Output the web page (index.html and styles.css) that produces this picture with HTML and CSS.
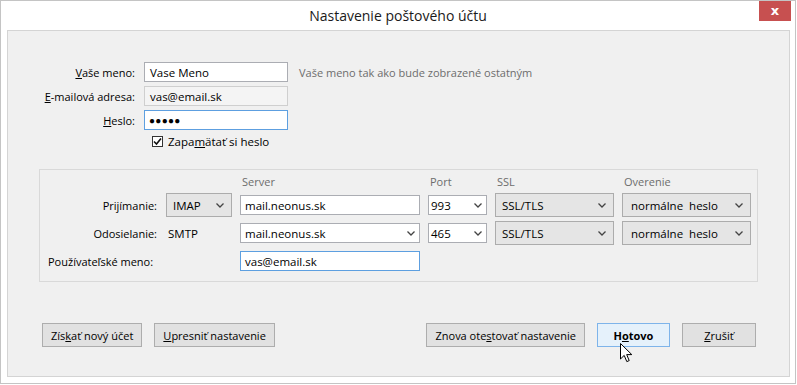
FILE: index.html
```html
<!DOCTYPE html>
<html lang="sk">
<head>
  <meta charset="UTF-8">
  <title>Nastavenie poštového účtu</title>
  <link rel="stylesheet" href="styles.css">
</head>
<body>
  <div class="window">
    <div class="titlebar">
      <span class="title">Nastavenie poštového účtu</span>
      <button class="close">x</button>
    </div>

    <div class="panel">
      <!-- Identity -->
      <div class="account">
        <span class="label"><u>V</u>aše meno:</span>
        <div class="field">Vase Meno</div>
        <span class="hint">Vaše meno tak ako bude zobrazené ostatným</span>

        <span class="label"><u>E</u>-mailová adresa:</span>
        <div class="field field-readonly">vas@email.sk</div>
        <span></span>

        <span class="label"><u>H</u>eslo:</span>
        <div class="field field-focus password">●●●●●</div>
        <span></span>

        <label class="remember">
          <span class="checkbox">
            <svg width="9" height="9" viewBox="0 0 9 9"><path d="M1 4.5 L3.5 7 L8 1.5" fill="none" stroke="#111" stroke-width="1.6"/></svg>
          </span>
          <span>Zapa<u>m</u>ätať si heslo</span>
        </label>
      </div>

      <!-- Servers -->
      <div class="servers">
        <span></span>
        <span></span>
        <span class="head">Server</span>
        <span class="head">Port</span>
        <span class="head">SSL</span>
        <span class="head">Overenie</span>

        <span class="label">Prijímanie:</span>
        <div class="select">IMAP <svg class="chev" width="8" height="5" viewBox="0 0 8 5"><path d="M0.5 0.5 L4 4 L7.5 0.5" fill="none" stroke="#444" stroke-width="1.3"/></svg></div>
        <div class="field field-row">mail.neonus.sk</div>
        <div class="field field-row combo">993 <svg class="chev" width="8" height="5" viewBox="0 0 8 5"><path d="M0.5 0.5 L4 4 L7.5 0.5" fill="none" stroke="#444" stroke-width="1.3"/></svg></div>
        <div class="select">SSL/TLS <svg class="chev" width="8" height="5" viewBox="0 0 8 5"><path d="M0.5 0.5 L4 4 L7.5 0.5" fill="none" stroke="#444" stroke-width="1.3"/></svg></div>
        <div class="select select-auth">normálne&nbsp; heslo <svg class="chev" width="8" height="5" viewBox="0 0 8 5"><path d="M0.5 0.5 L4 4 L7.5 0.5" fill="none" stroke="#444" stroke-width="1.3"/></svg></div>

        <span class="label">Odosielanie:</span>
        <span class="protocol">SMTP</span>
        <div class="field field-row combo combo-server">mail.neonus.sk <svg class="chev" width="8" height="5" viewBox="0 0 8 5"><path d="M0.5 0.5 L4 4 L7.5 0.5" fill="none" stroke="#444" stroke-width="1.3"/></svg></div>
        <div class="field field-row combo">465 <svg class="chev" width="8" height="5" viewBox="0 0 8 5"><path d="M0.5 0.5 L4 4 L7.5 0.5" fill="none" stroke="#444" stroke-width="1.3"/></svg></div>
        <div class="select">SSL/TLS <svg class="chev" width="8" height="5" viewBox="0 0 8 5"><path d="M0.5 0.5 L4 4 L7.5 0.5" fill="none" stroke="#444" stroke-width="1.3"/></svg></div>
        <div class="select select-auth">normálne&nbsp; heslo <svg class="chev" width="8" height="5" viewBox="0 0 8 5"><path d="M0.5 0.5 L4 4 L7.5 0.5" fill="none" stroke="#444" stroke-width="1.3"/></svg></div>

        <span class="label label-user">Používateľské meno:</span>
        <div class="field field-row field-focus">vas@email.sk</div>
      </div>

      <!-- Buttons -->
      <div class="actions">
        <div class="group">
          <button class="btn">Zís<u>k</u>ať nový účet</button>
          <button class="btn"><u>U</u>presniť nastavenie</button>
        </div>
        <div class="group">
          <button class="btn">Znova ote<u>s</u>tovať nastavenie</button>
          <button class="btn btn-default">H<u>o</u>tovo</button>
          <button class="btn"><u>Z</u>rušiť</button>
        </div>
      </div>
    </div>

    <!-- mouse pointer over Hotovo -->
    <svg class="pointer" width="13" height="20" viewBox="0 0 13 20">
      <path d="M0.5 0.5 L0.5 16 L4.2 12.4 L6.8 18.6 L9.2 17.6 L6.7 11.6 L11.8 11.6 Z" fill="#fff" stroke="#000" stroke-width="1" stroke-linejoin="miter"/>
    </svg>
  </div>
</body>
</html>
```

FILE: styles.css
```css
body {
  margin: 0;
  font-family: "Open Sans", "Noto Sans", sans-serif;
  font-size: 11px;
  color: #000;
  background: #fff;
}

u {
  text-underline-offset: 1px;
}

.window {
  position: relative;
  width: 796px;
  height: 384px;
  box-sizing: border-box;
  border: 1px solid #c4c4c4;
  background: #fff;
}

/* Title bar */
.titlebar {
  height: 29px;
  display: flex;
  align-items: center;
  justify-content: center;
}

.title {
  font-size: 14px;
  color: #1a1a1a;
}

.close {
  position: absolute;
  top: 0;
  right: 4px;
  width: 32px;
  height: 20px;
  padding: 0;
  border: 0;
  background: #c75050;
  color: #fff;
  font: bold 13px "DejaVu Sans", sans-serif;
  line-height: 18px;
}

/* Gray content panel */
.panel {
  width: 783px;
  height: 347px;
  margin-left: 6px;
  box-sizing: border-box;
  border: 1px solid #d4d4d4;
  background: #f0f0f0;
}

.label {
  text-align: right;
  align-self: center;
  white-space: nowrap;
}

.field {
  box-sizing: border-box;
  height: 20px;
  padding: 0 5px;
  border: 1px solid #abadb3;
  background: #fff;
  display: flex;
  align-items: center;
  white-space: nowrap;
  font-size: 11.5px;
}

.field-readonly {
  background: #f4f4f4;
  border-color: #cfcfcf;
}

.field-focus {
  border-color: #5d9fe0;
}

.password {
  font-size: 10px;
  letter-spacing: 0.3px;
  padding-left: 4px;
}

/* Identity grid */
.account {
  display: grid;
  grid-template-columns: 127px 144px auto;
  grid-auto-rows: 20px;
  column-gap: 9px;
  row-gap: 4px;
  padding-top: 31px;
}

.hint {
  align-self: center;
  margin-left: 2px;
  color: #6d6d6d;
}

.remember {
  grid-column: 2 / 4;
  height: 16px;
  display: flex;
  align-items: center;
  gap: 5px;
  padding-left: 8px;
  margin-top: -1px;
  font-size: 11.5px;
}

.checkbox {
  width: 11px;
  height: 11px;
  box-sizing: border-box;
  border: 1px solid #333;
  background: #fff;
  display: flex;
  align-items: center;
  justify-content: center;
}

/* Server group box */
.servers {
  width: 719px;
  box-sizing: border-box;
  margin: 15px 0 0 31px;
  padding: 4px 0 8px 0;
  border: 1px solid #d9d9d9;
  display: grid;
  grid-template-columns: 118px 66px 180px 59px 119px 129px;
  grid-template-rows: 15px 24px 24px 24px;
  column-gap: 8px;
  row-gap: 4px;
}

.servers .label {
  padding-right: 1px;
}

.head {
  padding-left: 2px;
  color: #6d6d6d;
  align-self: center;
}

.field-row {
  align-self: center;
  padding-left: 4px;
}

.combo {
  justify-content: space-between;
  padding: 0 4px 0 2px;
}

.combo-server {
  padding-left: 4px;
}

.select {
  box-sizing: border-box;
  height: 24px;
  padding: 0 7px 0 6px;
  border: 1px solid #acacac;
  background: #e5e5e5;
  display: flex;
  align-items: center;
  justify-content: space-between;
  white-space: nowrap;
  font-size: 11.5px;
}

.select-auth {
  padding-left: 8px;
}

.chev {
  flex: none;
}

.protocol {
  align-self: center;
  padding-left: 2px;
  font-size: 11.5px;
}

.label-user {
  grid-column: 1 / 3;
  text-align: left;
  padding-left: 8px;
}

/* Bottom buttons */
.actions {
  display: flex;
  justify-content: space-between;
  margin-top: 41px;
  padding: 0 33px 0 34px;
}

.group {
  display: flex;
  gap: 12px;
}

.btn {
  height: 24px;
  min-width: 74px;
  padding: 0 8px;
  border: 1px solid #adadad;
  background: #e1e1e1;
  font-family: inherit;
  font-size: 11px;
  color: #000;
}

.btn-default {
  min-width: 73px;
  border-color: #7eb4ea;
  background: #e5f1fb;
  font-weight: bold;
}

.pointer {
  position: absolute;
  left: 619px;
  top: 342px;
}
```
